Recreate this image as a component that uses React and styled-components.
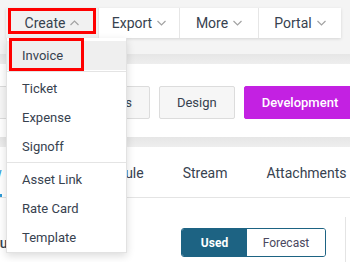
import React from "react";
import styled, { createGlobalStyle } from "styled-components";

const GlobalStyle = createGlobalStyle`
  html, body {
    margin: 0;
    padding: 0;
    background: #ffffff;
    overflow: hidden;
  }
  body {
    font-family: Roboto, "Liberation Sans", sans-serif;
    color: #37424f;
  }
`;

const Page = styled.div`
  position: relative;
  width: 350px;
  height: 262px;
  overflow: hidden;
  background: #fff;
`;

const Header = styled.header`
  background: #f4f4f4;
  padding: 8px 0 16px 6px;
`;

const Toolbar = styled.nav`
  display: flex;
  width: 335px;
  height: 30px;
  background: #fff;
  box-shadow: 0 1px 3px rgba(0, 0, 0, 0.13);
`;

const ToolButton = styled.div`
  position: relative;
  display: flex;
  align-items: center;
  justify-content: center;
  gap: 5px;
  width: ${(p) => p.$w}px;
  font-size: 14px;
  color: #37424f;
  background: ${(p) => (p.$open ? "#f1f1f1" : "#fff")};
  border-left: ${(p) => (p.$first ? "none" : "1px solid #e6e6e6")};
  box-sizing: border-box;

  ${(p) =>
    p.$marked &&
    `
    &::after {
      content: "";
      position: absolute;
      top: 0;
      left: 2px;
      right: 2px;
      bottom: 4px;
      border: 3px solid #ff0000;
    }
  `}
`;

const Band = styled.div`
  height: ${(p) => p.$h}px;
  background: linear-gradient(#e6e6e6, #eeeeee);
`;

const Content = styled.main`
  background: #fff;
`;

const ButtonRow = styled.div`
  display: flex;
  gap: 9px;
  padding: 22px 0 18px;
  margin-left: -5px;
`;

const Pill = styled.div`
  flex-shrink: 0;
  display: flex;
  align-items: center;
  height: 33px;
  padding: 0 17px;
  box-sizing: border-box;
  font-size: 13px;
  font-weight: ${(p) => (p.$accent ? 500 : 400)};
  color: ${(p) => (p.$accent ? "#fff" : "#37424f")};
  background: ${(p) => (p.$accent ? "#c321e2" : "#f6f6f6")};
  border: 1px solid ${(p) => (p.$accent ? "#c321e2" : "#dcdcdc")};
  border-radius: 2px;
`;

const Tabs = styled.div`
  display: flex;
  gap: 39px;
  border-bottom: 1px solid #e4e4e4;
  margin-left: -55px;
`;

const Tab = styled.div`
  flex-shrink: 0;
  padding: 16px 0 11px;
  line-height: 20px;
  font-size: 14px;
  color: ${(p) => (p.$active ? "#2d9ad6" : "#37424f")};
  border-bottom: 3px solid ${(p) => (p.$active ? "#2d9ad6" : "transparent")};
`;

const Panels = styled.div`
  display: grid;
  grid-template-columns: 345px 1fr;
  align-items: start;
  padding-top: 19px;
`;

const MainPanel = styled.section`
  display: flex;
  align-items: center;
  justify-content: space-between;
  padding: 11px 19px 0 0;
`;

const PanelTitle = styled.h3`
  margin: 0 0 0 -9px;
  font-size: 14px;
  font-weight: 500;
  color: #37424f;
`;

const SidePanel = styled.aside`
  border-left: 1px solid #e4e4e4;
  height: 60px;
`;

const Toggle = styled.div`
  display: flex;
  height: 29px;
  border: 1px solid #1d6383;
  border-radius: 3px;
  overflow: hidden;
  box-sizing: border-box;
`;

const ToggleOption = styled.div`
  display: flex;
  align-items: center;
  justify-content: center;
  width: ${(p) => p.$w}px;
  font-size: 12px;
  font-weight: ${(p) => (p.$on ? 700 : 400)};
  color: ${(p) => (p.$on ? "#fff" : "#4a4860")};
  background: ${(p) => (p.$on ? "#1d6383" : "#fff")};
`;

const Menu = styled.div`
  position: absolute;
  top: 38px;
  left: 6px;
  width: 121px;
  padding: 3px 0 0;
  background: #fff;
  border: 1px solid #e2e2e2;
  border-top: none;
  box-shadow: 0 3px 8px rgba(0, 0, 0, 0.14);
  box-sizing: border-box;
`;

const MenuItem = styled.div`
  height: 29px;
  display: flex;
  align-items: center;
  padding-left: 15px;
  font-size: 13px;
  color: #37424f;
  background: ${(p) => (p.$hover ? "#efefef" : "transparent")};
`;

const MenuDivider = styled.div`
  height: 1px;
  margin: 1px 0 2px;
  background: #e4e4e4;
`;

const Marker = styled.div`
  position: absolute;
  top: 0;
  left: 2px;
  width: 75px;
  height: 33px;
  border: 3px solid #ff0000;
  box-sizing: border-box;
`;

const Chevron = ({ up }) => (
  <svg width="9" height="6" viewBox="0 0 9 6">
    <polyline
      points={up ? "0.5,5 4.5,1 8.5,5" : "0.5,1 4.5,5 8.5,1"}
      fill="none"
      stroke="#a3a3a3"
      strokeWidth="1.2"
    />
  </svg>
);

const tools = [
  { label: "Create", w: 92, open: true },
  { label: "Export", w: 81 },
  { label: "More", w: 79 },
  { label: "Portal", w: 83 },
];

const menuGroups = [
  ["Invoice"],
  ["Ticket", "Expense", "Signoff"],
  ["Asset Link", "Rate Card", "Template"],
];

export default function App() {
  return (
    <Page>
      <GlobalStyle />
      <Header>
        <Toolbar>
          {tools.map((t, i) => (
            <ToolButton
              key={t.label}
              $w={t.w}
              $first={i === 0}
              $open={t.open}
              $marked={t.open}
            >
              {t.label}
              <Chevron up={t.open} />
            </ToolButton>
          ))}
        </Toolbar>
      </Header>
      <Band $h={10} />
      <Content>
        <ButtonRow>
          <Pill>Tasks</Pill>
          <Pill>Assets</Pill>
          <Pill>Design</Pill>
          <Pill $accent>Development</Pill>
        </ButtonRow>
        <Band $h={10} />
        <Tabs>
          <Tab $active>Overview</Tab>
          <Tab>Tasks</Tab>
          <Tab>Rule</Tab>
          <Tab>Stream</Tab>
          <Tab>Attachments</Tab>
        </Tabs>
        <Panels>
          <MainPanel>
            <PanelTitle>Budget</PanelTitle>
            <Toggle>
              <ToggleOption $on $w={65}>
                Used
              </ToggleOption>
              <ToggleOption $w={78}>Forecast</ToggleOption>
            </Toggle>
          </MainPanel>
          <SidePanel />
        </Panels>
      </Content>

      <Menu>
        {menuGroups.map((group, gi) => (
          <React.Fragment key={gi}>
            {gi > 0 && <MenuDivider />}
            {group.map((item) => (
              <MenuItem key={item} $hover={item === "Invoice"}>
                {item}
              </MenuItem>
            ))}
          </React.Fragment>
        ))}
        <Marker />
      </Menu>
    </Page>
  );
}
